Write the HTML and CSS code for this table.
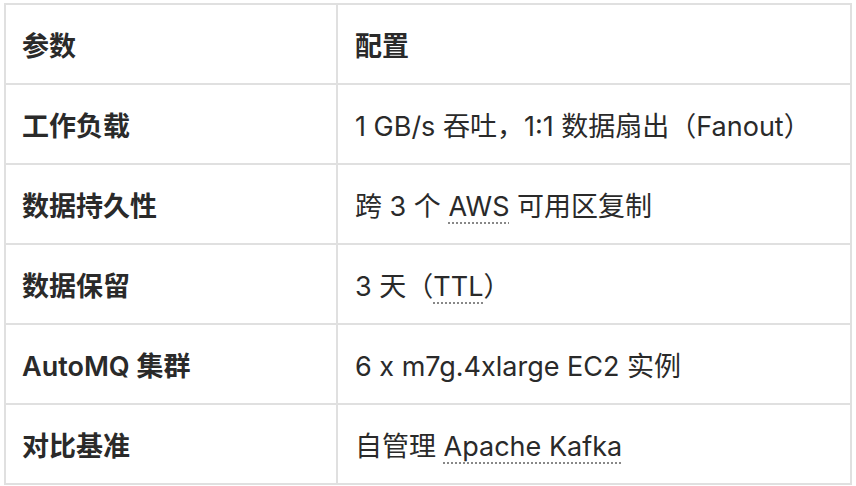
FILE: index.html
```html
<!DOCTYPE html>
<html lang="zh-CN">
<head>
<meta charset="utf-8">
<link rel="stylesheet" href="styles.css">
</head>
<body>
<table class="spec">
  <colgroup><col class="c1"><col class="c2"></colgroup>
  <tr><th>参数</th><th>配置</th></tr>
  <tr><td class="k">工作负载</td><td>1 GB/s 吞吐，1:1 数据扇出（Fanout）</td></tr>
  <tr><td class="k">数据持久性</td><td>跨 3 个 <span class="term">AWS</span> 可用区复制</td></tr>
  <tr><td class="k">数据保留</td><td>3 天（<span class="term">TTL</span>）</td></tr>
  <tr><td class="k">AutoMQ 集群</td><td>6 x m7g.4xlarge EC2 实例</td></tr>
  <tr><td class="k">对比基准</td><td>自管理 <span class="term">Apache Kafka</span></td></tr>
</table>
</body>
</html>
```
FILE: styles.css
```css
html, body { margin: 0; padding: 0; background: #fff; }
body {
  padding: 3px 4px 0 4px;
  font-family: Inter, "Noto Sans CJK SC", sans-serif;
  color: #2a2a2a;
  font-size: 27px;
}
.spec {
  border-collapse: collapse;
  width: 848px;
  table-layout: fixed;
}
.c1 { width: 332px; }
.spec th, .spec td {
  border: 2px solid #e0e0e0;
  height: 78px;
  padding: 0 0 0 16px;
  text-align: left;
  vertical-align: middle;
  white-space: nowrap;
}
.spec th { font-weight: 600; }
.spec td { font-weight: 400; }
.spec td.k { font-weight: 600; }
.spec th + th, .spec td + td { padding-left: 17px; }
.term {
  text-decoration: underline dotted #888;
  text-decoration-thickness: 2px;
  text-underline-offset: 7px;
}
```
